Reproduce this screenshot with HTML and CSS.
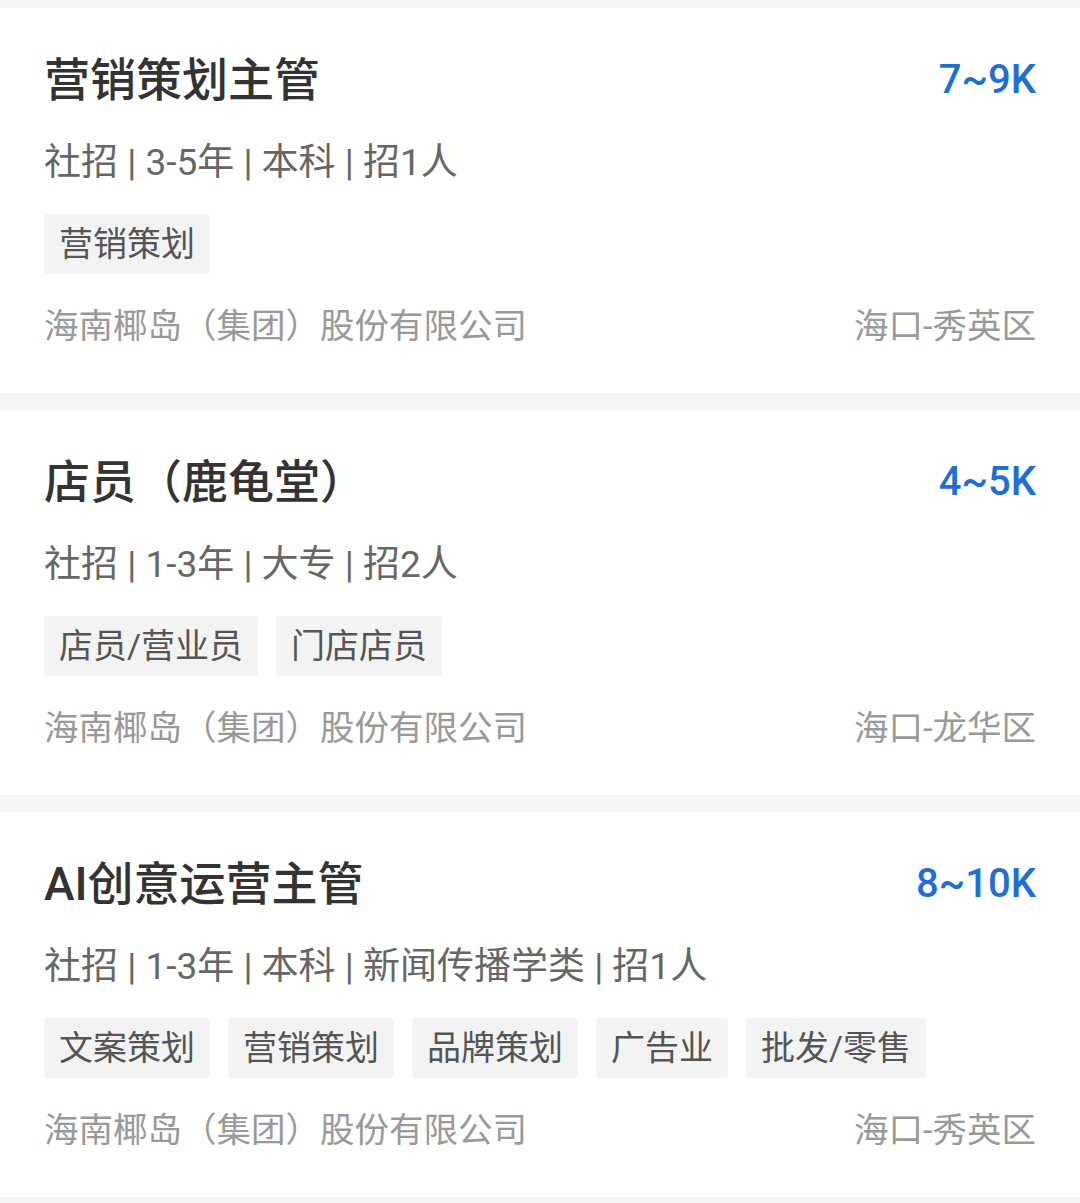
FILE: index.html
```html
<!DOCTYPE html>
<html lang="zh-CN">
<head>
  <meta charset="UTF-8" />
  <meta name="viewport" content="width=device-width, initial-scale=1.0"/>
  <title>职位列表</title>
  <link rel="stylesheet" href="styles.css">
</head>
<body>
  <div class="lista">

    <div class="puesto">
      <div class="cabecera">
        <div class="titulo">营销策划主管</div>
        <div class="salario">7~9K</div>
      </div>
      <div class="info">社招 | 3-5年 | 本科 | 招1人</div>
      <div class="etiquetas">
        <span class="etiqueta">营销策划</span>
      </div>
      <div class="pie">
        <span class="empresa">海南椰岛（集团）股份有限公司</span>
        <span class="lugar">海口-秀英区</span>
      </div>
    </div>

    <div class="puesto">
      <div class="cabecera">
        <div class="titulo">店员（鹿龟堂）</div>
        <div class="salario">4~5K</div>
      </div>
      <div class="info">社招 | 1-3年 | 大专 | 招2人</div>
      <div class="etiquetas">
        <span class="etiqueta">店员/营业员</span>
        <span class="etiqueta">门店店员</span>
      </div>
      <div class="pie">
        <span class="empresa">海南椰岛（集团）股份有限公司</span>
        <span class="lugar">海口-龙华区</span>
      </div>
    </div>

    <div class="puesto">
      <div class="cabecera">
        <div class="titulo">AI创意运营主管</div>
        <div class="salario">8~10K</div>
      </div>
      <div class="info">社招 | 1-3年 | 本科 | 新闻传播学类 | 招1人</div>
      <div class="etiquetas">
        <span class="etiqueta">文案策划</span>
        <span class="etiqueta">营销策划</span>
        <span class="etiqueta">品牌策划</span>
        <span class="etiqueta">广告业</span>
        <span class="etiqueta">批发/零售</span>
      </div>
      <div class="pie">
        <span class="empresa">海南椰岛（集团）股份有限公司</span>
        <span class="lugar">海口-秀英区</span>
      </div>
    </div>

  </div>
</body>
</html>
```

FILE: styles.css
```css
body {
  margin: 0;
  background-color: #f4f5f7;
  font-family: Roboto, "Noto Sans CJK SC", sans-serif;
}

.lista {
  padding-top: 8px;
}

.puesto {
  background-color: #fff;
  padding: 44px;
  margin-bottom: 17px;
}

.cabecera {
  display: flex;
  justify-content: space-between;
  align-items: center;
  height: 56px;
}

.titulo {
  font-size: 46px;
  font-weight: 500;
  color: #333;
  line-height: 56px;
}

.salario {
  font-size: 40px;
  font-weight: 500;
  color: #1f6fd2;
  line-height: 56px;
}

.info {
  margin-top: 30px;
  font-size: 37px;
  line-height: 50px;
  color: #666;
}

.etiquetas {
  margin-top: 26px;
  display: flex;
  gap: 18px;
}

.etiqueta {
  height: 60px;
  line-height: 60px;
  padding: 0 15px;
  font-size: 34px;
  color: #555;
  background-color: #f3f3f3;
  border-radius: 4px;
}

.pie {
  margin-top: 29px;
  display: flex;
  justify-content: space-between;
  font-size: 34.5px;
  line-height: 46px;
  color: #999;
}
```
